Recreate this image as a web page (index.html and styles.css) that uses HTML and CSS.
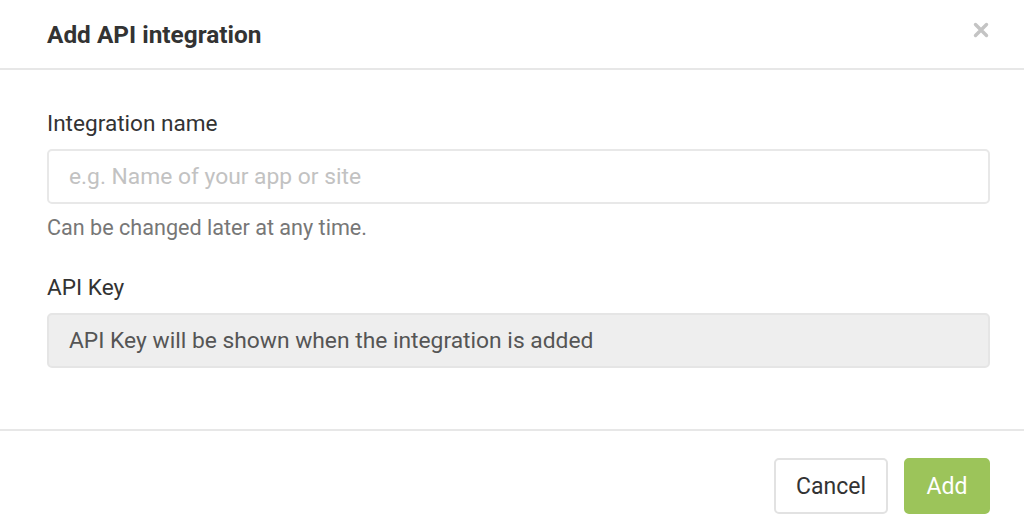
FILE: index.html
```html
<!DOCTYPE html>
<html>
<head>
<meta charset="utf-8">
<link rel="stylesheet" href="styles.css">
</head>
<body>
<div class="modal">
  <div class="modal-header">
    <h1 class="title">Add API integration</h1>
    <button class="close" aria-label="Close">
      <svg width="16" height="16" viewBox="0 0 16 16"><path d="M2.5 2.5 L13.5 13.5 M13.5 2.5 L2.5 13.5" stroke="#c4c4c4" stroke-width="3.4" stroke-linecap="round"/></svg>
    </button>
  </div>
  <div class="modal-body">
    <div class="field">
      <label class="label">Integration name</label>
      <input class="input" type="text" placeholder="e.g. Name of your app or site">
      <div class="help">Can be changed later at any time.</div>
    </div>
    <div class="field">
      <label class="label">API Key</label>
      <div class="readonly">API Key will be shown when the integration is added</div>
    </div>
  </div>
  <div class="modal-footer">
    <button class="btn btn-default">Cancel</button>
    <button class="btn btn-primary">Add</button>
  </div>
</div>
</body>
</html>
```
FILE: styles.css
```css
html, body {
  margin: 0;
  padding: 0;
  background: #fff;
}
body {
  font-family: Roboto, "Liberation Sans", sans-serif;
  color: #333;
}
.modal {
  width: 1024px;
  height: 528px;
  display: flex;
  flex-direction: column;
}
.modal-header {
  height: 70px;
  box-sizing: border-box;
  border-bottom: 2px solid #e7e7e7;
  display: flex;
  align-items: center;
  justify-content: space-between;
  padding: 2px 35px 0 47px;
}
.title {
  margin: 0;
  font-size: 24.4px;
  font-weight: 700;
  color: #333;
  line-height: 1;
}
.close {
  border: 0;
  background: none;
  padding: 0;
  margin: 0 0 10px 0;
  width: 16px;
  height: 16px;
  display: flex;
}
.modal-body {
  padding: 41px 34px 0 47px;
  height: 361px;
  box-sizing: border-box;
  border-bottom: 2px solid #e7e7e7;
}
.field {
  display: flex;
  flex-direction: column;
}
.field + .field {
  margin-top: 35px;
}
.label {
  font-size: 22.6px;
  line-height: 26px;
  color: #333;
  margin-bottom: 12px;
}
.input {
  height: 55px;
  box-sizing: border-box;
  border: 2px solid #e8e8e8;
  border-radius: 5px;
  padding: 0 20px;
  font-family: inherit;
  font-size: 22.8px;
  color: #333;
  outline: none;
}
.input::placeholder {
  color: #c2c2c2;
}
.help {
  margin-top: 12px;
  font-size: 21.6px;
  line-height: 24px;
  color: #777;
}
.readonly {
  height: 55px;
  box-sizing: border-box;
  border: 2px solid #e5e5e5;
  border-radius: 5px;
  background: #eeeeee;
  padding: 0 20px;
  display: flex;
  align-items: center;
  font-size: 22.8px;
  color: #555;
}
.modal-footer {
  flex: 1;
  display: flex;
  justify-content: flex-end;
  align-items: flex-start;
  gap: 16px;
  padding: 27px 34px 0 47px;
}
.btn {
  height: 56px;
  box-sizing: border-box;
  border-radius: 5px;
  font-family: inherit;
  font-size: 23px;
  padding: 0;
  cursor: pointer;
}
.btn-default {
  background: #fff;
  border: 2px solid #e2e2e2;
  color: #333;
  width: 114px;
}
.btn-primary {
  background: #9cc45a;
  border: 2px solid #9cc45a;
  color: #fff;
  width: 86px;
}
```
